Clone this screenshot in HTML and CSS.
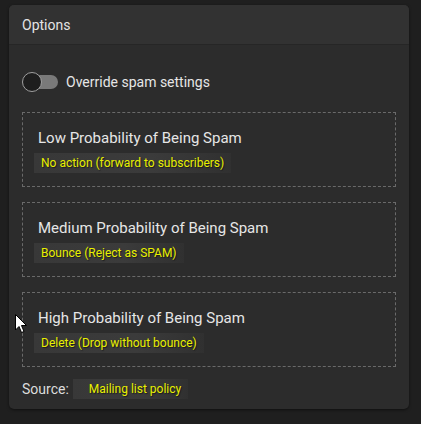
FILE: index.html
```html
<!DOCTYPE html>
<html>
<head>
<meta charset="utf-8">
<link rel="stylesheet" href="styles.css">
</head>
<body>
<div class="card">
  <div class="card-header">Options</div>
  <div class="card-body">
    <div class="toggle-row">
      <span class="switch"><span class="track"></span><span class="knob"></span></span>
      <span class="toggle-label">Override spam settings</span>
    </div>
    <div class="box">
      <div class="box-title">Low Probability of Being Spam</div>
      <div class="value"><span class="hl">No action (forward to subscribers)</span></div>
    </div>
    <div class="box">
      <div class="box-title">Medium Probability of Being Spam</div>
      <div class="value"><span class="hl">Bounce (Reject as SPAM)</span></div>
    </div>
    <div class="box box-last">
      <div class="box-title">High Probability of Being Spam</div>
      <div class="value"><span class="hl">Delete (Drop without bounce)</span></div>
    </div>
    <div class="source">
      <span class="source-label">Source:</span>
      <span class="hl hl-source">Mailing list policy</span>
    </div>
  </div>
</div>
<svg class="cursor" width="13" height="20" viewBox="0 0 13 20">
  <path d="M0.5 0.5 L0.5 16 L4 12.5 L6.5 18.5 L9 17.5 L6.5 11.5 L11.5 11.5 Z" fill="#ffffff" stroke="#000000" stroke-width="1"/>
</svg>
</body>
</html>
```
FILE: styles.css
```css
html, body {
  margin: 0;
  padding: 0;
  background: #1f1f1f;
  font-family: Roboto, "Liberation Sans", Arial, sans-serif;
}
body {
  padding: 5px 12px 0 9px;
  width: 400px;
  height: 419px;
  position: relative;
}
.card {
  background: #2c2c2c;
  border-radius: 5px;
  box-shadow: 0 1px 3px rgba(0,0,0,0.5);
  overflow: hidden;
}
.card-header {
  background: #323232;
  height: 40px;
  box-sizing: border-box;
  border-bottom: 1px solid #262626;
  padding: 0 13px;
  display: flex;
  align-items: center;
  color: #e4e4e4;
  font-size: 14px;
}
.card-body {
  padding: 27px 13px 9px 13px;
}
.toggle-row {
  display: flex;
  align-items: center;
  height: 20px;
  margin-bottom: 20px;
}
.switch {
  position: relative;
  width: 36px;
  height: 20px;
  margin-right: 8px;
}
.track {
  position: absolute;
  left: 2px;
  top: 3px;
  width: 34px;
  height: 14px;
  border-radius: 7px;
  background: #7a7a7a;
}
.knob {
  position: absolute;
  left: 0;
  top: 0;
  width: 18px;
  height: 18px;
  border-radius: 50%;
  background: #1e1e1e;
  border: 1px solid #a0a0a0;
}
.toggle-label {
  color: #e6e6e6;
  font-size: 14px;
  font-weight: 400;
}
.box {
  border: 1px dashed #6a6a6a;
  padding: 14px 15px 13px 15px;
  margin-bottom: 15px;
}
.box-last {
  margin-bottom: 11px;
}
.box-title {
  color: #e6e6e6;
  font-size: 15px;
  line-height: 22px;
  margin-bottom: 3px;
}
.value {
  line-height: 20px;
}
.hl {
  display: inline-block;
  color: #e8f000;
  font-size: 12px;
  line-height: 20px;
  padding: 0 7px;
  margin-left: -4px;
  background: linear-gradient(90deg, #383838, #3b3b3b 60%, rgba(58,58,58,0.3));
  text-shadow: 1px 1px 1px rgba(0,0,0,0.5);
}
.source {
  display: flex;
  align-items: center;
  height: 22px;
}
.source-label {
  color: #dcdcdc;
  font-size: 14px;
  margin-right: 4px;
}
.hl-source {
  margin-left: 0;
  padding-left: 16px;
}
.cursor {
  position: absolute;
  left: 15px;
  top: 314px;
}
```
